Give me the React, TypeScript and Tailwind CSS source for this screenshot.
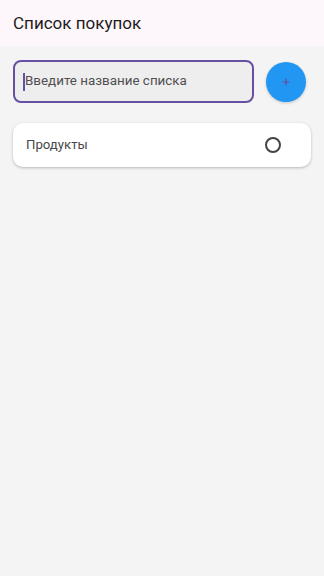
import React from "react";

export default function App() {
  return (
    <div className="w-[324px] h-[576px] bg-[#f4f4f4] flex flex-col" style={{ fontFamily: "Roboto, 'Noto Sans', sans-serif" }}>
      <div className="h-[46px] bg-[#fdf7fb] flex items-center px-[13px]">
        <span className="text-[17px] text-[#1d1b20] leading-none">Список покупок</span>
      </div>
      <div className="flex flex-col px-[13px] pt-[14px] gap-[20px]">
        <div className="flex items-center gap-[12px]">
          <div className="w-[241px] h-[43px] rounded-[8px] border-2 border-[#6750a4] bg-[#efeeef] flex items-center pl-[8px]">
            <span className="w-[2px] h-[18px] bg-[#6750a4]"></span>
            <span className="text-[13.4px] text-[#4f4f4f]">Введите название списка</span>
          </div>
          <button className="w-[40px] h-[40px] rounded-full bg-[#2196f3] flex items-center justify-center shadow-[0_1px_3px_rgba(0,0,0,0.2)]">
            <svg width="10" height="10" viewBox="0 0 10 10">
              <path d="M5 1.5v7M1.5 5h7" stroke="#6a4ca0" strokeWidth="1.2" />
            </svg>
          </button>
        </div>
        <div className="w-[298px] h-[44px] bg-white rounded-[10px] shadow-[0_1px_3px_rgba(0,0,0,0.25)] flex items-center justify-between pl-[13px] pr-[30px]">
          <span className="text-[13.2px] text-[#494949]">Продукты</span>
          <span className="w-[16px] h-[16px] rounded-full border-2 border-[#444]"></span>
        </div>
      </div>
    </div>
  );
}
